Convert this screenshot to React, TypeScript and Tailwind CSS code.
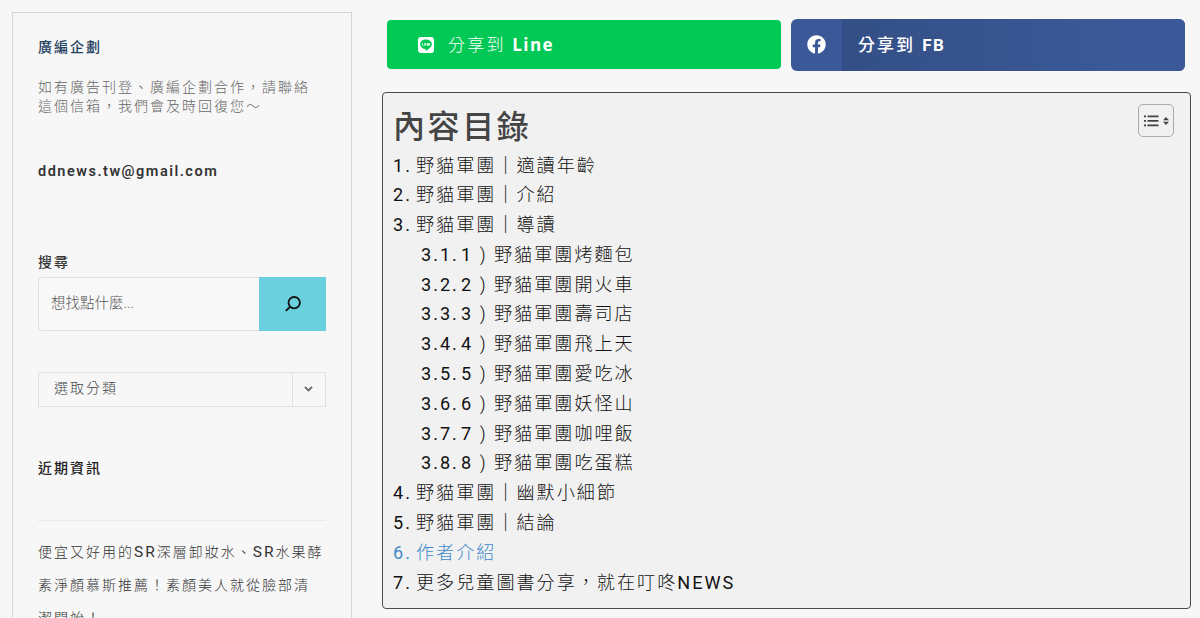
import { FaFacebook, FaLine } from "react-icons/fa";

type TocItem = {
  no: string;
  title: string;
  latin?: string;
  active?: boolean;
  children?: { no: string; prefix: string; title: string }[];
};

const TOC: TocItem[] = [
  { no: "1.", title: "野貓軍團｜適讀年齡" },
  { no: "2.", title: "野貓軍團｜介紹" },
  {
    no: "3.",
    title: "野貓軍團｜導讀",
    children: [
      { no: "3.1.", prefix: "1 )", title: "野貓軍團烤麵包" },
      { no: "3.2.", prefix: "2 )", title: "野貓軍團開火車" },
      { no: "3.3.", prefix: "3 )", title: "野貓軍團壽司店" },
      { no: "3.4.", prefix: "4 )", title: "野貓軍團飛上天" },
      { no: "3.5.", prefix: "5 )", title: "野貓軍團愛吃冰" },
      { no: "3.6.", prefix: "6 )", title: "野貓軍團妖怪山" },
      { no: "3.7.", prefix: "7 )", title: "野貓軍團咖哩飯" },
      { no: "3.8.", prefix: "8 )", title: "野貓軍團吃蛋糕" },
    ],
  },
  { no: "4.", title: "野貓軍團｜幽默小細節" },
  { no: "5.", title: "野貓軍團｜結論" },
  { no: "6.", title: "作者介紹", active: true },
  { no: "7.", title: "更多兒童圖書分享，就在叮咚", latin: "NEWS" },
];

function TocTitle({ text }: { text: string }) {
  const [head, tail] = text.split("｜");

  return (
    <span className="font-light">
      {head}
      {tail && <span className="font-medium">｜</span>}
      {tail}
    </span>
  );
}

function Sidebar() {
  return (
    <aside className="ml-3 mt-3 h-[640px] w-[340px] shrink-0 border border-[#d5d5d5] px-[25px] text-sm tracking-[2px]">
      <h2 className="mt-6 h-5 font-medium leading-5 text-[#1f4060]">廣編企劃</h2>
      <p className="mt-[21px] w-[280px] font-light leading-[18.5px] text-[#666]">
        如有廣告刊登、廣編企劃合作，請聯絡
        <br />
        這個信箱，我們會及時回復您～
      </p>
      <p className="mt-[47px] h-5 text-[14.5px] font-semibold leading-5 tracking-[1.5px] text-[#333]">
        ddnews.tw@gmail.com
      </p>

      <label htmlFor="search" className="mt-[70px] block h-5 font-medium leading-5 text-[#333]">
        搜尋
      </label>
      <div className="mt-[5px] flex h-[54px]">
        <input
          id="search"
          placeholder="想找點什麼..."
          className="min-w-0 flex-1 rounded-l-sm border border-r-0 border-[#e0e0e0] bg-[#f8f8f8] px-3 text-[14.5px] font-light tracking-normal text-[#555] placeholder:text-[#555]"
        />
        <button className="flex w-[67px] items-center justify-center bg-[#6ad0dd] text-[#111]">
          <svg viewBox="0 0 24 24" className="size-6" fill="none" stroke="currentColor" strokeWidth="1.8">
            <circle cx="13.2" cy="10.700" r="5.700" />
            <path d="M9 14.900L4.800 18.900" strokeWidth="2" />
          </svg>
        </button>
      </div>

      <button className="mt-[41px] flex h-[35px] w-full border border-[#e0e0e0] text-left font-light tracking-[2px] text-[#444]">
        <span className="flex-1 pl-[15px] leading-[31px]">選取分類</span>
        <span className="flex h-full w-[33px] items-center justify-center border-l border-[#e0e0e0]">
          <svg viewBox="0 0 10 7" className="mr-[2px] w-[9px]" fill="none" stroke="#666" strokeWidth="2">
            <path d="M1 1l4 4 4-4" />
          </svg>
        </span>
      </button>

      <h2 className="mt-[51px] h-5 font-medium leading-5 text-[#222]">近期資訊</h2>
      <hr className="mt-[42px] border-[#e9e9e9]" />
      <p className="mt-[15px] whitespace-nowrap font-light leading-[33px] text-[#333]">
        便宜又好用的<span className="text-[15.500px] font-normal">SR</span>深層卸妝水、
        <span className="text-[15.500px] font-normal">SR</span>水果酵
        <br />
        素淨顏慕斯推薦！素顏美人就從臉部清
        <br />
        潔開始！
      </p>
    </aside>
  );
}

function ShareButtons() {
  return (
    <div className="ml-[5px] flex h-[52px] w-[798px] justify-between text-[17px] text-white">
      <a className="mt-px flex h-[49px] w-[394px] items-center rounded bg-[#02c955] pl-[31px]">
        <FaLine className="size-4 shrink-0 scale-115" />
        <span className="ml-[14px] pt-px font-light tracking-[2.300px]">
          分享到 <b className="font-bold tracking-[1.400px] font-['Open_Sans']">Line</b>
        </span>
      </a>
      <a className="flex h-[52px] w-[394px] overflow-hidden rounded-md bg-[#3b5998]">
        <span className="flex w-[51px] items-center justify-center pb-px pr-px">
          <FaFacebook className="size-[19px]" />
        </span>
        <span className="flex flex-1 items-center bg-linear-to-r from-[#334f86] to-[#3b5998] to-80% pl-4 pt-px font-medium tracking-[2px]">
          分享到&nbsp;<b className="ml-px font-bold tracking-[1.500px]">FB</b>
        </span>
      </a>
    </div>
  );
}

function TocToggle() {
  return (
    <button className="mt-[11px] flex h-[33px] w-9 items-center justify-center rounded-[5px] border border-[#aaa] text-[#444]">
      <svg width="16" height="12" viewBox="0 0 16 12" fill="currentColor">
        <path d="M0 0.500h2v1.700H0zM3.500 0.500h11v1.700h-11zM0 5h2v1.700H0zM3.500 5h11v1.700h-11zM0 9.500h2v1.700H0zM3.500 9.500h11v1.700h-11z" />
      </svg>
      <svg width="6" height="8" viewBox="0 0 6 8" className="ml-[3px]" fill="currentColor">
        <path d="M0 3.300L3 0l3 3.300zM0 4.700h6L3 8z" />
      </svg>
    </button>
  );
}

function TableOfContents() {
  return (
    <nav className="mt-[21px] h-[517px] w-[809px] rounded border border-[#4a4a4a] bg-[#f1f1f1] pl-[10px] pr-4">
      <div className="flex h-[57.5px] justify-between">
        <h1 className="mt-[9px] text-[32px] font-medium leading-[50px] tracking-[2.600px] text-[#444]">內容目錄</h1>
        <TocToggle />
      </div>
      <ol className="text-[18.100px] leading-[29.800px] tracking-[2px] text-[#111]">
        {TOC.map((item) => (
          <li key={item.no}>
            <a className={item.active ? "flex text-[#428bca]" : "flex"}>
              <span className="w-[23px] shrink-0">{item.no}</span>
              <TocTitle text={item.title} />
              {item.latin}
            </a>
            {item.children && (
              <ol className="pl-7">
                {item.children.map((child) => (
                  <li key={child.no} className="flex">
                    <span className="w-10">{child.no}</span>
                    <span className="w-[33px] whitespace-nowrap">
                      {child.prefix.slice(0, -1)}
                      <span className="font-light">)</span>
                    </span>
                    <span className="font-light">{child.title}</span>
                  </li>
                ))}
              </ol>
            )}
          </li>
        ))}
      </ol>
    </nav>
  );
}

export default function App() {
  return (
    <div className="flex h-[618px] w-[1200px] overflow-hidden bg-[#f7f7f7] font-[Roboto,'Noto_Sans_CJK_TC',sans-serif]">
      <Sidebar />
      <main className="ml-[30px] mt-[19px]">
        <ShareButtons />
        <TableOfContents />
      </main>
    </div>
  );
}
